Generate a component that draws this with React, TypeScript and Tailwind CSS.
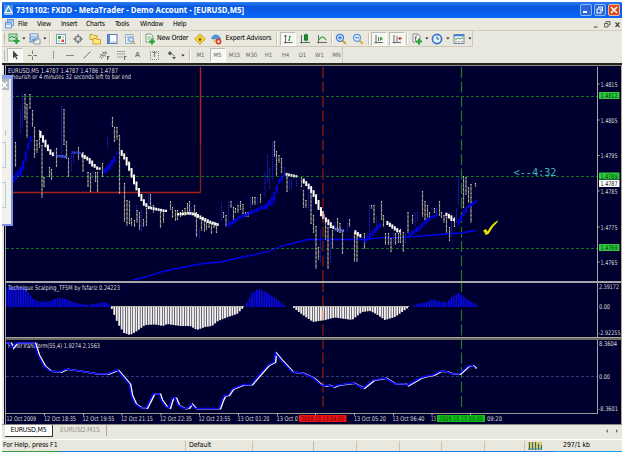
import React from "react";

const UI = "font-['DejaVu_Sans_Condensed','DejaVu_Sans',sans-serif]";

/* ---------- chart data: [x, top, bottom] ---------- */
const BARS: number[][] = [
  [15.5, 142, 167], [25, 94, 120], [27, 104, 138], [30, 94, 109], [32.5, 110, 127], [34.5, 127, 158], [37, 140, 153],
  [39.5, 130, 148], [42, 145, 198], [44, 177, 187], [49.5, 167, 177], [51.5, 169, 180], [56.5, 148, 167], [64, 109, 145],
  [66.5, 141, 159], [68.5, 158, 177], [78.5, 147, 160], [83, 152, 172], [88, 172, 187], [90.5, 173, 192], [95.5, 172, 182],
  [97.5, 172, 192], [102.5, 163, 177], [112.5, 117, 127], [114.5, 127, 142], [117, 127, 140], [119.5, 135, 194],
  [124.5, 183, 222], [127, 200, 226], [129.5, 201, 224], [131.5, 218, 226], [134.5, 220, 227], [137, 210, 223],
  [139.5, 212, 230], [143.5, 219, 227], [146.5, 208, 226], [150.5, 194, 208], [153.5, 205, 213], [160.5, 212, 228],
  [163.5, 210, 223], [170.5, 201, 210], [172.5, 207, 218], [175.5, 210, 221], [177.5, 210, 220], [180.5, 212, 217],
  [182.5, 210, 216], [185, 208, 216], [187.5, 203, 213], [189.5, 201, 215], [194.5, 205, 217], [196.5, 212, 237],
  [201.5, 218, 231], [204.5, 220, 232], [206.5, 222, 230], [209, 222, 228], [211.5, 223, 234], [214, 222, 228],
  [216.5, 223, 233], [223.5, 212, 218], [226, 215, 227], [231, 201, 208], [233.5, 207, 220], [235.5, 208, 213],
  [238, 205, 213], [240.5, 201, 210], [243, 204, 214], [245.5, 212, 217], [248, 212, 217], [252.5, 197, 205],
  [255, 197, 205], [260.5, 194, 203], [274.5, 141, 157], [276.5, 151, 176], [279, 155, 163], [281.5, 158, 173],
  [287, 173, 192], [301.5, 177, 187], [303.5, 190, 208], [306, 200, 208], [311, 192, 224], [313.5, 215, 233],
  [316, 226, 269], [318.5, 247, 260], [325.5, 218, 240], [328, 227, 269], [332.5, 230, 248], [337.5, 218, 232],
  [340, 223, 233], [342.5, 230, 254], [349.5, 219, 227], [354.5, 232, 262], [357, 233, 262], [364.5, 233, 249],
  [371.5, 205, 209], [374, 205, 223], [381.5, 201, 220], [383.5, 215, 227], [385.5, 233, 245], [388.5, 233, 245],
  [391, 238, 252], [395.5, 233, 245], [398.5, 233, 243], [400.5, 229, 243], [403.3, 232, 252], [408, 212, 233],
  [412.5, 215, 224], [422.5, 191, 217], [425, 201, 220], [427.5, 205, 218], [429.5, 212, 220], [434.5, 208, 213],
  [439.5, 201, 216], [441.5, 212, 218], [444, 215, 223], [446.5, 217, 233], [449.5, 227, 241], [454.5, 217, 227],
  [463.5, 176, 208], [466, 177, 195], [468.5, 187, 203], [471, 184, 223], [475.5, 183, 187],
];
const DOTTED: number[][] = [
  [20.5, 110, 133], [22.5, 93, 127], [61.5, 106, 157], [54.5, 150, 157], [71.5, 153, 172], [73.5, 152, 163], [92.5, 172, 180],
  [107.5, 138, 148], [110.5, 123, 125], [136.5, 205, 222], [141.5, 210, 232], [148.5, 193, 210], [191.5, 207, 217],
  [199.5, 228, 240], [221.5, 202, 222], [228.5, 202, 223], [250.5, 197, 212], [257.5, 197, 205], [265, 173, 197],
  [267.5, 155, 183], [269.5, 168, 190], [272.5, 142, 180], [284.5, 167, 175], [289.5, 180, 190], [291.5, 180, 188],
  [296.5, 180, 187], [308.5, 190, 210], [320.5, 230, 262], [330.5, 237, 262], [335, 222, 230], [347.5, 223, 233],
  [369.5, 205, 236], [376.5, 217, 230], [400.5, 233, 243], [393.5, 233, 244], [405.5, 232, 243], [415, 212, 225], [417.5, 212, 222],
  [432, 208, 211], [436.5, 208, 215], [451.5, 220, 237], [456.5, 208, 223], [458.5, 177, 205],
];
const W = "#fdfdf6";
const B = "#0000ee";
const FAST: { c: string; p: number[][] }[] = [
  { c: B, p: [[13, 177], [18, 170], [21, 166], [24, 155], [26, 147], [29, 138], [33, 132]] },
  { c: W, p: [[39.5, 132], [44, 140], [49, 150], [54, 156]] },
  { c: "#4a52f0", p: [[56, 156], [62, 156], [66, 157]] },
  { c: "#3038c0", p: [[70, 152], [80, 153]] },
  { c: W, p: [[82, 155], [90, 160], [95, 167], [100, 169]] },
  { c: B, p: [[102, 171], [108, 165], [113, 157], [117, 150]] },
  { c: W, p: [[120, 150], [127, 160], [132, 173], [137, 187], [142, 199], [147, 207], [156, 209], [166, 211]] },
  { c: W, p: [[177, 214], [189, 213], [195, 214], [202, 218], [210, 222], [219, 225]] },
  { c: B, p: [[227, 224], [240, 216], [250, 212], [265, 205], [272, 196], [278, 180], [285, 173]] },
  { c: "#e4e4d8", p: [[286, 174], [297, 176.5]] },
  { c: W, p: [[302, 179], [310, 187], [316, 197], [323, 217], [328, 221], [334, 229]] },
  { c: "#6a70e0", p: [[335, 229], [345, 231]] },
  { c: W, p: [[354, 231], [362, 237]] },
  { c: B, p: [[365, 238], [373, 230], [382, 221]] },
  { c: W, p: [[385, 221], [392, 226], [400, 232]] },
  { c: B, p: [[408, 234], [418, 227], [424, 221], [430, 217], [438, 214]] },
  { c: W, p: [[446, 214], [450, 216], [454, 221]] },
  { c: B, p: [[457, 221], [463, 211], [468, 205], [477, 200]] },
];
const SLOW = "133,280 145,277 165,271 190,266 200,264 220,262 243,257 267,252 282,246 308,239.5 367,239.5 380,237.7 401,237.7 433,235 460,233 476,230.5";
const HIST: number[][] = [
  [5, 287], [25, 287], [28, 292], [33, 299], [40, 302], [50, 301], [58, 298], [66, 299], [75, 303], [88, 305], [105, 302], [110, 305],
  [111, 307], [118, 324], [124, 333], [130, 335], [137, 331], [145, 325], [155, 324.5], [163, 326], [167, 324], [180, 326], [190, 326],
  [197, 330], [205, 327], [212, 326], [218, 321], [228, 317], [237, 314], [244, 307], [246, 305], [252, 293], [258, 289], [266, 292],
  [275, 298], [284, 305], [286, 306.5], [292, 306.5], [300, 313], [313, 322], [325, 320], [335, 317.5], [352, 320], [362, 312], [370, 311],
  [376, 314], [385, 320], [395, 317], [409, 307], [412, 306], [420, 303], [425, 303], [433, 299], [440, 302], [447, 302], [453, 296], [459, 293],
  [465, 298], [470, 301], [477, 305],
];
const FISHER =
  "5,343 10,343 12,348 16,343 34,343 38,355 44,366 50,371 60,372 66,369 80,371 98,374 107,374 117,370 123,377 129,384 131,395 135,404 141,408 146,408 150,400 153,394 159,394 161,400 166,407 169,408 172,398 175,398 178,405 184,408.5 188,408 191,404 195,408.5 219,408.5 222,400 224,396 228,395 232,389 243,384.5 251,384.5 260,374 268,365 274,362 275,353 280,359 292,372 302,373 313,378 321,385 325,386 328,385 333,387 338,385 353,383 363,388 373,380 385,378 395,384 405,384 407,385.5 420,378 427,376 433,375 440,371 446,371.5 452,374 459,374 468,366 472,365.5 475,368";

function valueAt(pts: number[][], x: number) {
  for (let i = 1; i < pts.length; i++) {
    if (x <= pts[i][0]) {
      const [x0, y0] = pts[i - 1];
      const [x1, y1] = pts[i];
      return y0 + ((y1 - y0) * (x - x0)) / (x1 - x0);
    }
  }
  return pts[pts.length - 1][1];
}
const STEP = 2.46;
const GRID = Array.from({ length: 192 }, (_, i) => 6 + i * STEP).filter((x) => x < 477);
const HIST_BARS = GRID.map((x) => [x, valueAt(HIST, x)]);
const FAST_BARS = FAST.flatMap((f) =>
  GRID.filter((x) => x >= f.p[0][0] && x <= f.p[f.p.length - 1][0]).map((x) => {
    const a = valueAt(f.p, x - 1);
    const slope = Math.abs(valueAt(f.p, Math.min(x + STEP, f.p[f.p.length - 1][0])) - valueAt(f.p, Math.max(x, f.p[0][0])));
    return { x, y: a, h: 2.2 + Math.min(slope, 7) * 1.1, c: f.c };
  })
);

function T({ x, y, w, s = 6.5, c = "#dcdcd4", children }: { x: number; y: number; w: number; s?: number; c?: string; children: string }) {
  return (
    <text x={x} y={y} textLength={w} lengthAdjust="spacingAndGlyphs" fontSize={s} fill={c} fontFamily="'DejaVu Sans Condensed','DejaVu Sans',sans-serif">
      {children}
    </text>
  );
}

function Cross({ y1, y2 }: { y1: number; y2: number }) {
  return (
    <g strokeDasharray="11 3.5" fill="none">
      <line x1="323" x2="323" y1={y1} y2={y2} stroke="#641410" strokeWidth="1.8" />
      <line x1="461.5" x2="461.5" y1={y1} y2={y2} stroke="#1c7a22" strokeWidth="1.2" />
    </g>
  );
}

function Axis() {
  return <div className="h-full w-px shrink-0 bg-[#a7a79d]" />;
}

function PricePanel() {
  return (
    <div className="flex h-[214px] w-full">
      <svg className="shrink-0" width="591" height="214" viewBox="6 67 591 214">
        {[96, 176, 248].map((y) => (
          <line key={y} x1="6" x2="597" y1={y + 0.5} y2={y + 0.5} stroke="#16701c" strokeWidth="1" strokeDasharray="3 2" />
        ))}
        <Cross y1={67} y2={281} />
        <path d="M200.5 67V143" fill="none" stroke="#b4241c" strokeWidth="1.4" />
        <path d="M200.5 143V192.5" fill="none" stroke="#8c1a16" strokeWidth="1.4" />
        <path d="M200.5 192.5H6" fill="none" stroke="#a8201a" strokeWidth="1.4" />
        {DOTTED.map(([x, a, b], i) => (
          <line key={i} x1={x} x2={x} y1={a} y2={b} stroke="#1a24d8" strokeWidth="1" strokeDasharray="1.4 1" />
        ))}
        <polyline points={SLOW} fill="none" stroke="#0000f4" strokeWidth="1.3" />
        {BARS.map(([x, a, b], i) => (
          <g key={i}>
            <line x1={x} x2={x} y1={a} y2={b} stroke="#7b7b74" strokeWidth="1.2" />
            <line x1={x} x2={x} y1={a} y2={b} stroke="#d6d4b0" strokeWidth="1" strokeDasharray="1 3.4" />
          </g>
        ))}
        {FAST_BARS.map((f, i) => (
          <rect key={i} x={f.x - 0.9} y={f.y - 1} width="2" height={f.h} fill={f.c} />
        ))}
        <rect x="322" y="211" width="2" height="8" fill="#f0aaa0" />
        <T x={8} y={73} w={110}>EURUSD,M5  1.4787 1.4787 1.4786 1.4787</T>
        <T x={12} y={79} w={119}>hourish or 4 minutes 32 seconds left to bar end</T>
        <text x="513.5" y="176" textLength="43" lengthAdjust="spacingAndGlyphs" fontSize="10" fill="#3cbcb4" fontFamily="'DejaVu Sans Mono',monospace">
          {"<--4:32"}
        </text>
        <path d="M483 230.500L486 229L487.500 231.500Q491 224.500 497.500 220.500L498 221.500Q492.500 226.500 488.500 234L485.500 235Q484.800 232.500 483 230.500z" fill="#e6e000" />
      </svg>
      <Axis />
      <svg className="shrink-0" width="24" height="214" viewBox="598 67 24 214">
        {[["1.4815", 84], ["1.4805", 120], ["1.4795", 155.5], ["1.4785", 191], ["1.4775", 227], ["1.4765", 262]].map(([t, y]) => (
          <g key={t}>
            <line x1="598" x2="599.500" y1={y as number} y2={y as number} stroke="#bbb" />
            <T x={600.5} y={(y as number) + 2.5} w={17}>{t as string}</T>
          </g>
        ))}
        {[["1.4812", 95.5], ["1.4789", 176], ["1.4769", 247.5]].map(([t, y]) => (
          <g key={t}>
            <rect x="599" y={(y as number) - 3.5} width="20.500" height="7" fill="#2cc83a" />
            <T x={600.5} y={(y as number) + 2.5} w={17} c="#06400c">{t as string}</T>
          </g>
        ))}
        <rect x="599" y="180" width="20.500" height="7" fill="#fff" />
        <T x={600.5} y={186} w={17} c="#111">1.4787</T>
      </svg>
    </div>
  );
}

function ScalpingPanel() {
  return (
    <div className="flex h-[54px] w-full">
      <svg className="shrink-0" width="591" height="54" viewBox="6 283 591 54">
        <Cross y1={281} y2={337} />
        {HIST_BARS.map(([x, y], i) =>
          y < 306 ? (
            <rect key={i} x={x - 0.8} y={y} width="1.700" height={307 - y} fill="#0808ee" />
          ) : y > 307.2 ? (
            <rect key={i} x={x - 0.9} y="306.500" width="1.900" height={y - 306.5} fill="#f4f2ea" />
          ) : null
        )}
        <rect x="322" y="311" width="2" height="8" fill="#f0aaa0" />
        <path d="M111 306.500H244M293 306.500H409" stroke="#b8b6aa" strokeWidth="1" />
        <T x={8} y={290} w={112}>Technique Scalping_TF5M by fsfariz 0.24223</T>
      </svg>
      <Axis />
      <svg className="shrink-0" width="24" height="54" viewBox="598 283 24 54">
        <T x={599} y={289} w={20} s={6.2}>2.39172</T>
        <T x={599} y={309} w={11}>0.00</T>
        <T x={598.5} y={335} w={22} s={6.2}>-2.92255</T>
      </svg>
    </div>
  );
}

function FisherPanel() {
  return (
    <div className="flex h-[73px] w-full">
      <svg className="shrink-0" width="591" height="73" viewBox="6 340 591 73">
        <line x1="6" x2="597" y1="376.500" y2="376.500" stroke="#343a78" strokeDasharray="3 2" />
        <Cross y1={338} y2={409} />
        <T x={8} y={347.5} w={92}>FisherTransform(55,4) 1.9274 2.1563</T>
        <polyline points={FISHER} transform="translate(1.6 .3)" fill="none" stroke="#f2f2e8" strokeWidth="1.500" />
        <polyline points={FISHER} fill="none" stroke="#0505f0" strokeWidth="1.500" />
      </svg>
      <Axis />
      <svg className="shrink-0" width="24" height="73" viewBox="598 340 24 73">
        <T x={599} y={346} w={18}>8.3604</T>
        <T x={599} y={379} w={11}>0.00</T>
        <T x={598.5} y={411} w={19.5}>-8.3601</T>
      </svg>
    </div>
  );
}

function TimeAxis() {
  /* text, x, width */
  const labels: [string, number, number][] = [
    ["12 Oct 2009", 6.5, 29.5], ["12 Oct 18:35", 44, 32], ["12 Oct 19:55", 82.5, 32], ["12 Oct 21:15", 121, 32], ["12 Oct 22:35", 160, 32],
    ["12 Oct 23:55", 198.5, 32], ["13 Oct 01:20", 237.5, 32], ["13 Oct 0", 276.5, 21.5], ["13 Oct 05:20", 354, 32], ["13 Oct 06:40", 392.5, 32],
    ["13", 431, 5], ["09:20", 487, 15],
  ];
  return (
    <svg className="block shrink-0" width="616" height="11" viewBox="6 413 616 11">
      <path d="M6 413.500H598" stroke="#9a988c" strokeWidth="1" />
      {[44.5, 83.5, 122, 161, 199.5, 238.5, 277.5, 315.5, 354.5, 393.5, 432, 470.5].map((x) => (
        <path key={x} d={`M${x} 413v2.500`} stroke="#bbb" />
      ))}
      {labels.map(([t, x, w]) => (
        <T key={t} x={x} y={421} w={w}>{t}</T>
      ))}
      <rect x="299" y="415" width="47.500" height="7" fill="#f01414" />
      <T x={301} y={420.8} w={43} c="#5c0404">2009.10.13 04:05</T>
      <rect x="437" y="415" width="48" height="7" fill="#12c01c" />
      <T x={439} y={420.8} w={44} c="#045008">2009.10.13 09:00</T>
    </svg>
  );
}

/* ---------- toolbar pieces ---------- */
function Cell({ w, pressed, children }: { w: string; pressed?: boolean; children?: React.ReactNode }) {
  return (
    <div className={`flex h-[14px] shrink-0 items-center justify-center ${w} ${pressed ? "border border-t-[#bdbcb4] border-l-[#bdbcb4] border-r-white border-b-white bg-[#f6f6f2]" : ""}`}>
      {children}
    </div>
  );
}
function I({ children }: { children: React.ReactNode }) {
  return <svg className="shrink-0" width="12" height="12" viewBox="0 0 12 12" fill="none">{children}</svg>;
}
function Drop({ w = "w-[5px]" }: { w?: string }) {
  return (
    <Cell w={w}>
      <svg width="4" height="3" viewBox="0 0 4 3"><path d="M.3.5h3.200L1.900 2.500z" fill="#222" /></svg>
    </Cell>
  );
}
function Sep({ w }: { w: string }) {
  return <Cell w={w}><div className="h-[12px] w-px bg-[#cbbfae]" /><div className="h-[12px] w-px bg-white" /></Cell>;
}
const Plus = ({ x, y }: { x: number; y: number }) => (
  <path d={`M${x} ${y - 3}v6M${x - 3} ${y}h6`} stroke="#27a836" strokeWidth="2.200" />
);

function MainToolbar() {
  return (
    <div className="flex h-[16px] w-[471px] items-center border-r border-b border-[#cfc7b8]">
      <Cell w="w-[4px]"><div className="h-[11px] w-px bg-[#c4b8a6]" /></Cell>
      <Cell w="w-[15px]"><I><rect x="1" y="1" width="8" height="7" fill="#c4e4c8" stroke="#4c9c5c" /><path d="M2 5l2-2 2 2 2-2" stroke="#3c7c4c" /><Plus x={8.5} y={8} /></I></Cell>
      <Drop w="w-[6px]" />
      <Cell w="w-[16px]"><I><rect x="1" y="1" width="8" height="8" fill="#a8c8f0" stroke="#6888b8" /><path d="M1.500 2h7" stroke="#fff" /><path d="M5 6h6v5H5z" fill="#f4f0d8" stroke="#8898b0" /><path d="M3 7h5" stroke="#4878c8" /></I></Cell>
      <Drop w="w-[4px]" />
      <Sep w="w-[6px]" />
      <Cell w="w-[16px]"><I><rect x="1.500" y="1.500" width="9" height="9" fill="#fff" stroke="#78a0b8" /><rect x="3" y="3" width="3" height="3" fill="#30a040" /><rect x="6.500" y="6.500" width="2.500" height="2.500" fill="#d84038" /><path d="M3 8h2M7 4h2" stroke="#80a8c8" /></I></Cell>
      <Cell w="w-[17px]"><I><circle cx="6" cy="6" r="3" stroke="#707478" strokeWidth="1.200" /><path d="M6 1v4M6 7v4M1 6h4M7 6h4" stroke="#707478" /></I></Cell>
      <Cell w="w-[17px]"><I><path d="M1 1.500h3l1 1h3v4H1z" fill="#f8e480" stroke="#c8a030" /><path d="M4 5.500h3l1 1h3.500V11H4z" fill="#ffe880" stroke="#d8a028" /><path d="M7 1.500l2 2.500" stroke="#f0c040" /></I></Cell>
      <Cell w="w-[18px]"><I><rect x="1.500" y="1.500" width="9.500" height="9" fill="#f8fbff" stroke="#5a7eae" /><path d="M3 2v8" stroke="#4a78d8" strokeWidth="1.800" /><path d="M5 9h5" stroke="#a0b8d0" /></I></Cell>
      <Cell w="w-[17px]"><I><path d="M1.500 1.500h7.500v9H1.500z" fill="#e4eef8" stroke="#98b0c8" /><path d="M3 4h4M3 7h2" stroke="#88a8c8" /><circle cx="7" cy="6.500" r="2.500" fill="#c8e0fa" stroke="#6898c8" /><path d="M9 8.500l2 2.500" stroke="#d8a030" strokeWidth="1.500" /></I></Cell>
      <Sep w="w-[5px]" />
      <Cell w="w-[13px]"><I><path d="M2 1h5l2 2v6H2z" fill="#fff" stroke="#809880" /><path d="M3.500 4h4M3.500 6h3" stroke="#60a868" /><Plus x={8} y={8.5} /></I></Cell>
      <span className="w-[36px] pl-px text-[7px] leading-none tracking-[-0.28px] whitespace-nowrap">New Order</span>
      <Cell w="w-[16px]"><I><path d="M6 .8L11.200 6 6 11.200.8 6z" fill="#f8dc38" stroke="#c89c20" /><path d="M6 3v3.500M4.500 6h3L6 8.300z" stroke="#7c6410" fill="#7c6410" strokeWidth=".7" /></I></Cell>
      <Cell w="w-[17px]"><I><path d="M.8 5.500q5-8 10.400 0l-2.400 1H3z" fill="#4c98d8" /><path d="M2.500 6.500h6v2q-3 3-6-.5z" fill="#f0d078" /><circle cx="8.500" cy="8.500" r="2.900" fill="#dc3828" /><rect x="7.400" y="7.400" width="2.200" height="2.200" fill="#fff" /></I></Cell>
      <span className="w-[49px] pl-px text-[7px] leading-none tracking-[-0.24px] whitespace-nowrap">Expert Advisors</span>
      <Sep w="w-[7px]" />
      <Cell w="w-[16px]" pressed><I><path d="M3.500 2v8.500M2 9.500h8.500M2.500 3.500l1-1.500 1 1.500" stroke="#606868" /><path d="M7.500 3v5M6 7h1.500M7.500 3.500H9" stroke="#38983c" /></I></Cell>
      <Cell w="w-[17px]"><I><path d="M2.500 2v8.500M1 9.500h10" stroke="#606868" /><rect x="5.500" y="2" width="3" height="5" fill="#28b040" stroke="#187828" /><path d="M7 .5v8" stroke="#187828" /></I></Cell>
      <Cell w="w-[17px]"><I><path d="M2.500 2v8.500M1 9.500h10" stroke="#606868" /><path d="M3 7q2-4 4-3t3 3" stroke="#38a848" strokeWidth="1.200" /></I></Cell>
      <Sep w="w-[3px]" />
      <Cell w="w-[16px]"><I><circle cx="5" cy="4.800" r="3.500" fill="#d0e8fc" stroke="#3c80d8" strokeWidth="1.300" /><path d="M5 3v3.600M3.200 4.800h3.600" stroke="#2868c8" /><path d="M7.500 7.500l3.300 3.300" stroke="#c89c28" strokeWidth="1.900" /></I></Cell>
      <Cell w="w-[18px]"><I><circle cx="5" cy="4.800" r="3.500" fill="#e0f0fc" stroke="#5c98dc" strokeWidth="1.300" /><path d="M3.200 4.800h3.600" stroke="#2868c8" /><path d="M7.500 7.500l3.300 3.300" stroke="#d0ac48" strokeWidth="1.900" /></I></Cell>
      <Sep w="w-[4px]" />
      <Cell w="w-[16px]" pressed><I><path d="M3 2v8.500M1.500 9.500H10M5.500 4v4" stroke="#686c6c" /><path d="M7 3.500L10 5.800 7 8z" fill="#28a038" /></I></Cell>
      <Cell w="w-[2px]" />
      <Cell w="w-[16px]" pressed><I><path d="M3 2v8.500M1.500 9.500H10M6 3v6" stroke="#686c6c" /><path d="M9.500 3.300L7 5.500l2.500 2.200z" fill="#d03828" /><path d="M9 5.500h2" stroke="#d03828" /></I></Cell>
      <Sep w="w-[4px]" />
      <Cell w="w-[15px]"><I><path d="M2 1h5l2 2v6H2z" fill="#fff" stroke="#888" /><path d="M6.500 3q-2-1-2 1v4M3.500 5H6" stroke="#777" /><Plus x={8} y={8.5} /></I></Cell>
      <Drop />
      <Cell w="w-[16px]"><I><circle cx="6" cy="6" r="4.600" fill="#e4f0fc" stroke="#3474cc" strokeWidth="1.700" /><path d="M6 3.500V6h2" stroke="#2c4c78" /></I></Cell>
      <Drop />
      <Cell w="w-[17px]"><I><rect x="1" y="1.500" width="10" height="9" fill="#eef6fc" stroke="#6888a8" /><path d="M1 2.500h10" stroke="#3c80d8" strokeWidth="1.600" /><path d="M2 6h2l1-1 2 1 2-1h1" stroke="#60a040" /><path d="M2 8.700h8" stroke="#c09060" strokeDasharray="2 1" /></I></Cell>
      <Drop />
    </div>
  );
}

function LineToolbar() {
  const g = "#77776f";
  return (
    <div className="flex h-[16px] w-[341px] items-center border-r border-[#cfc7b8]">
      <Cell w="w-[5px]"><div className="h-[11px] w-px bg-[#c4b8a6]" /></Cell>
      <Cell w="w-[16px]" pressed><I><path d="M4 1.500v8l2-2 1.300 3 1.200-.6L7.200 7H9.500z" fill="#444" /></I></Cell>
      <Cell w="w-[18px]"><I><path d="M6.500 1.500v3.500M6.500 7.500v3.500M2 6.500h3.500M7.500 6.500h3.500" stroke={g} /></I></Cell>
      <Cell w="w-[3px]" />
      <Cell w="w-[17px]"><I><path d="M6.500 2v8" stroke="#999990" /></I></Cell>
      <Cell w="w-[17px]"><I><path d="M2 6.500h8" stroke="#88887f" /></I></Cell>
      <Cell w="w-[17px]"><I><path d="M2.500 9.500l7-7" stroke={g} /></I></Cell>
      <Cell w="w-[17px]"><I><path d="M1 9l7-7M3 10l6-7M2 5.500l6 1.500M4 3l5 1.500" stroke="#77776f" strokeWidth=".8" /><path d="M9.500 7v4M9.500 7.500h2M9.500 9h1.500" stroke="#444" strokeWidth=".8" /></I></Cell>
      <Cell w="w-[17px]"><I><path d="M2 2.500h8M2 5h8M2 8h6" stroke="#888880" strokeDasharray="1.500 .7" /><path d="M9.500 7v4M9.500 7.500h2" stroke="#444" strokeWidth=".8" /></I></Cell>
      <Cell w="w-[17px]"><span className="font-['Liberation_Sans',sans-serif] text-[7.5px] leading-none font-bold text-[#77776f]">A</span></Cell>
      <Cell w="w-[17px]"><span className="flex h-[9px] w-[9px] items-center justify-center border border-dotted border-[#88887f] font-['Liberation_Sans',sans-serif] text-[6.5px] leading-none font-bold text-[#6c6c66]">T</span></Cell>
      <Cell w="w-[17px]"><I><path d="M4 2l2.200 2.300L4 6.500 1.800 4.300zM8 10.500L6 8h4z" fill="#55554f" /><path d="M6 5l3 2.500" stroke="#77776f" /></I></Cell>
      <Drop />
      <Cell w="w-[3px]" />
      <Sep w="w-[4px]" />
      {["M1", "M5", "M15", "M30", "H1", "H4", "D1", "W1", "MN"].map((t) => (
        <Cell key={t} w={t === "M5" ? "w-[16px] mx-[0.5px]" : "w-[17px]"} pressed={t === "M5"}>
          <span className="text-[6px] leading-none text-[#66665f]">{t}</span>
        </Cell>
      ))}
    </div>
  );
}

export default function App() {
  return (
    <div className={`relative flex h-[452px] w-[625px] flex-col overflow-hidden bg-white pt-[2px] pr-[3px] pl-[2px] text-black ${UI}`}>
      {/* title bar */}
      <div className="flex h-[16px] shrink-0 items-center bg-linear-to-b from-[#2a80f4] via-[#0a55dc] via-30% to-[#0868fc] pr-[2px] pl-[2px]">
        <svg width="9" height="10" viewBox="0 0 9 10"><rect width="9" height="10" fill="#4a94dc" /><path d="M4.500 1.500L8 7.500H1z" fill="none" stroke="#fff" strokeWidth="1.200" /><path d="M0 9h9" stroke="#d8ecfc" /></svg>
        <svg className="ml-[3px]" width="232" height="14" viewBox="0 0 232 14">
          <text x="0" y="10" textLength="228" lengthAdjust="spacingAndGlyphs" fontSize="8" fontWeight="bold" fill="#fff" fontFamily="'Open Sans','Noto Sans',sans-serif">7318102: FXDD - MetaTrader - Demo Account - [EURUSD,M5]</text>
        </svg>
        <div className="ml-auto flex gap-[2px]">
          <div className="flex h-[12px] w-[12px] items-end rounded-[2px] border border-[#8cb8f4] bg-[#2c68dc] p-[2px]"><div className="h-[2px] w-[4px] bg-white" /></div>
          <div className="flex h-[12px] w-[12px] items-center justify-center rounded-[2px] border border-[#8cb8f4] bg-[#2c68dc]">
            <svg width="8" height="8" viewBox="0 0 8 8" fill="none" stroke="#fff"><path d="M2.500 2V1h4v4h-1" /><rect x="1" y="3" width="4" height="4" /></svg>
          </div>
          <div className="flex h-[12px] w-[12px] items-center justify-center rounded-[2px] border border-[#f0b8a0] bg-[#dc4a20]">
            <svg width="8" height="8" viewBox="0 0 8 8" stroke="#fff" strokeWidth="1.500"><path d="M1 1l6 6M7 1L1 7" /></svg>
          </div>
        </div>
      </div>

      <div className="flex h-[45px] shrink-0 flex-col bg-[#e9e8df]">
        {/* menu */}
        <div className="flex h-[13px] items-center border-b border-[#d3cbbb] pl-[3px] text-[7px] leading-none tracking-[-0.3px]">
          <svg width="9" height="10" viewBox="0 0 9 10" fill="#dcecfc" stroke="#6c9cd8"><rect x="2.500" y=".5" width="6" height="6" /><rect x=".5" y="3.500" width="6" height="5.500" /><path d="M1 5h5M3 2h5" /></svg>
          <span className="w-[19px] pl-[4px]">File</span>
          <span className="w-[24px] pl-[4px]">View</span>
          <span className="w-[25px] pl-[4px]">Insert</span>
          <span className="w-[29px] pl-[4px]">Charts</span>
          <span className="w-[25px] pl-[4px]">Tools</span>
          <span className="w-[33px] pl-[4px]">Window</span>
          <span className="pl-[4px]">Help</span>
          <svg className="mr-px ml-auto" width="30" height="9" viewBox="0 0 30 9" fill="none" stroke="#44443f"><path d="M3 7h3.500" /><path d="M15 3V1.500h4v3.500h-1.500M13.500 3.500h3.500v3.500h-3.500z" strokeWidth=".8" /><path d="M24.500 2.500l4 4.500M28.500 2.500l-4 4.500" strokeWidth="1.200" /></svg>
        </div>
        <MainToolbar />
        <LineToolbar />
      </div>

      {/* chart window */}
      <div className="flex h-[361px] w-[620px] shrink-0 border-t-2 border-[#24241e] bg-[#000030]">
        <div className="w-[4px] shrink-0 border-r border-l-2 border-[#a4a298] border-l-[#e9e8df]" />
        <div className="flex w-[616px] shrink-0 flex-col border-r border-r-[#b8a888]">
          <div className="h-[2px] border-t border-[#8c8a80]" />
          <PricePanel />
          <div className="h-[2px] shrink-0 bg-[#a6a6aa]" />
          <ScalpingPanel />
          <div className="h-[3px] shrink-0 border-t border-[#a8a498] bg-[#6c6864]" />
          <FisherPanel />
          <TimeAxis />
        </div>
      </div>

      {/* sheet tabs */}
      <div className="flex h-[15px] shrink-0 items-start border-t border-[#8c8a84] bg-[#e9e8df] pl-[3px] text-[7px] leading-none">
        <div className="flex h-[12px] w-[48px] items-center justify-center border-r border-b border-[#33332f] bg-white tracking-[-0.22px]">EURUSD,M5</div>
        <div className="flex h-[11px] w-[54px] items-center border-r border-[#aaa89e] pl-[7px] tracking-[-0.2px] text-[#96948a]">EURUSD,M15</div>
        <svg className="mt-[3px] mr-[3px] ml-auto" width="14" height="6" viewBox="0 0 14 6" fill="#77776f"><path d="M3 1v4L1 3zM11 1v4l2-2z" /></svg>
      </div>

      {/* status bar */}
      <div className="flex h-[12px] shrink-0 items-center border-t border-white bg-[#e9e8df] text-[7px] leading-none tracking-[-0.12px]">
        <span className="w-[183px] pl-px">For Help, press F1</span>
        <div className="flex h-[10px] w-[67px] items-center border-l border-[#cfc0ac] pl-[3px]">Default</div>
        <div className="h-[10px] w-[61px] border-l border-[#cfc0ac]" />
        <div className="h-[10px] w-[43px] border-l border-[#b8b8b0]" />
        <div className="h-[10px] w-[43px] border-l border-[#cfc0ac]" />
        <div className="h-[10px] w-[42px] border-l border-[#cfc0ac]" />
        <div className="h-[10px] w-[43px] border-l border-[#cfc0ac]" />
        <div className="h-[10px] w-[40px] border-l border-[#cfc0ac]" />
        <div className="flex h-[10px] w-[39px] items-center border-l border-[#cfc0ac] pl-[3px]">
          <svg width="14" height="8" viewBox="0 0 14 8"><rect width="14" height="8" fill="#d8c868" /><path d="M1.500 0v8M4.500 0v8M7.500 0v8M10.500 2v6M13.500 3v5" stroke="#2c6878" /><path d="M0 7h14" stroke="#3c90b0" /></svg>
        </div>
        <span>297/1 kb</span>
      </div>
      <div className="flex h-px shrink-0 grow"><div className="w-[57px] bg-[#3c9c3c]" /><div className="w-[496px] bg-[#2c7ce8]" /><div className="grow bg-[#18a0e8]" /></div>

      {/* docked side window overlapping the chart */}
      <div className="absolute top-[75px] left-[2px] flex h-[151px] w-[11px] flex-col border-r-[2px] border-b-2 border-[#7c90e4] bg-[#f2f1ea]">
        <div className="h-[4px] w-[10px] shrink-0 bg-[#8ca4ec]" />
        <div className="flex h-[11px] w-[7px] shrink-0 items-center bg-[#b4b6c0]"><svg width="6" height="8" viewBox="0 0 6 8"><path d="M0 1l5 6M5 1L0 7" stroke="#fff" strokeWidth="1.600" /></svg></div>
        <div className="mt-[40px] h-[6px] w-[4px] border-r border-[#b8c8e0]" />
        <div className="mt-[6px] h-[26px] w-[4px] border border-l-0 border-[#b4ccdc]" />
        <div className="mt-[14px] h-[26px] w-[4px] border border-l-0 border-[#b4ccdc]" />
      </div>
    </div>
  );
}
